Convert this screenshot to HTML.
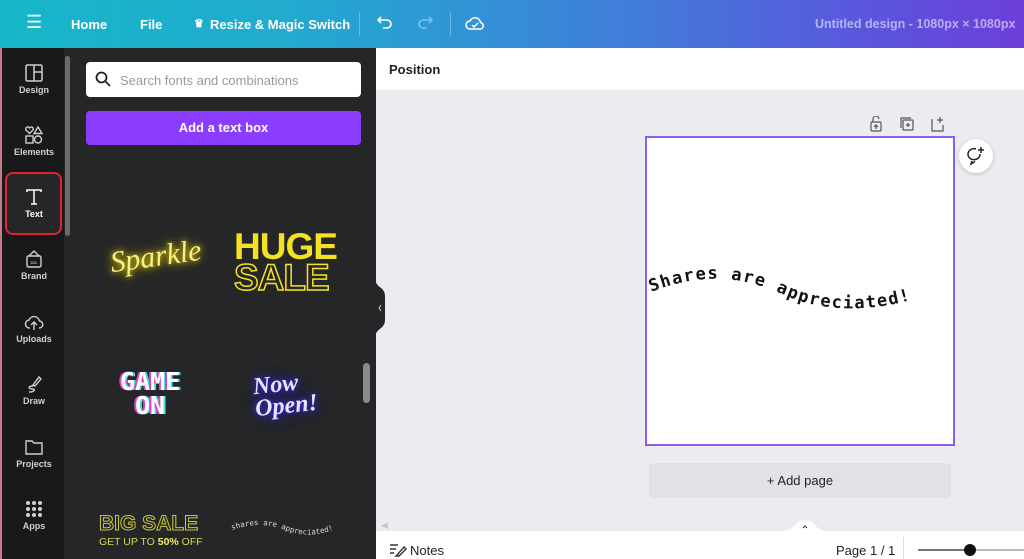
<!DOCTYPE html>
<html><head><meta charset="utf-8"><style>
*{margin:0;padding:0;box-sizing:border-box}
body{width:1024px;height:559px;overflow:hidden;font-family:"Liberation Sans",sans-serif;background:#ebecf0;position:relative}
.top{position:absolute;left:0;top:0;width:1024px;height:48px;background:linear-gradient(90deg,#16b7c8 0%,#23a9d0 30%,#3f7fd9 60%,#5b55dc 85%,#6c3fd9 100%);color:#fff;font-weight:bold;font-size:13px}
.top span{position:absolute;top:17px}
.side{position:absolute;left:0;top:48px;width:64px;height:511px;background:#18191b;border-left:2px solid #c47a8a}
.it{position:absolute;left:0;width:64px;text-align:center;color:#d0d0d0;font-size:9px;font-weight:bold}
.it svg{display:block;margin:0 auto 3px}
.panel{position:absolute;left:64px;top:48px;width:312px;height:511px;background:#252627}
.abs{position:absolute}
</style></head><body>
<div class="top">
<span style="left:26px;top:12px;font-size:18px;font-weight:normal">☰</span>
<span style="left:71px">Home</span><span style="left:140px">File</span>
<span style="left:194px;font-size:11px;top:17px">♛</span><span style="left:210px">Resize &amp; Magic Switch</span>
<div class="abs" style="left:359px;top:12px;width:1px;height:24px;background:rgba(255,255,255,.3)"></div>
<svg class="abs" style="left:376px;top:15px" width="18" height="16" viewBox="0 0 18 16" fill="none" stroke="#fff" stroke-width="1.6"><path d="M5 2 L2 5 L5 8 M2 5 H11 a4 4 0 0 1 0 8 H7"/></svg>
<svg class="abs" style="left:416px;top:15px" width="18" height="16" viewBox="0 0 18 16" fill="none" stroke="rgba(255,255,255,.4)" stroke-width="1.6"><path d="M13 2 L16 5 L13 8 M16 5 H7 a4 4 0 0 0 0 8 H11"/></svg>
<div class="abs" style="left:450px;top:12px;width:1px;height:24px;background:rgba(255,255,255,.3)"></div>
<svg class="abs" style="left:465px;top:14px" width="20" height="18" viewBox="0 0 20 18" fill="none" stroke="#fff" stroke-width="1.5"><path d="M5 15 a4 4 0 0 1 0-8 a5.5 5.5 0 0 1 10.5 1.5 a3.3 3.3 0 0 1 0 6.5 Z M7 11 l2 2 l4-4"/></svg>
<span style="left:815px;color:rgba(255,255,255,.55);font-size:12.5px">Untitled design - 1080px × 1080px</span>
</div>
<div class="side">
<div class="it" style="top:16px"><svg width="18" height="18" fill="none" stroke="#d0d0d0" stroke-width="1.5"><rect x="1" y="1" width="16" height="16" rx="1.5"/><path d="M9 1V17M9 8H17"/></svg>Design</div>
<div class="it" style="top:78px"><svg width="18" height="18" fill="none" stroke="#d0d0d0" stroke-width="1.4"><path d="M4.5 7.5 L1 4 a2 2 0 0 1 3.5-2 a2 2 0 0 1 3.5 2Z M13 1 L17 7.5 H9Z"/><rect x="1" y="10" width="7" height="7"/><circle cx="13" cy="13.5" r="3.5"/></svg>Elements</div>
<div class="abs" style="left:3px;top:124px;width:57px;height:63px;border:2px solid #e0242f;border-radius:8px;background:#252627"></div>
<div class="it" style="top:140px;color:#fff"><svg width="18" height="18" fill="none" stroke="#fff" stroke-width="1.5"><path d="M2 4V2H16V4M9 2V16M6 16H12"/></svg>Text</div>
<div class="it" style="top:202px"><svg width="18" height="18" fill="none" stroke="#d0d0d0" stroke-width="1.4"><rect x="2" y="6" width="14" height="11" rx="1.5"/><path d="M4 6 L9 1 L14 6"/><text x="9" y="14" font-size="4" fill="#d0d0d0" stroke="none" text-anchor="middle">CO.</text></svg>Brand</div>
<div class="it" style="top:265px"><svg width="20" height="18" fill="none" stroke="#d0d0d0" stroke-width="1.4"><path d="M6 15 a4 4 0 0 1-1-8 a5.5 5.5 0 0 1 10.5 1 a3.5 3.5 0 0 1-.5 7 M10 17V9 M7 12 L10 9 L13 12"/></svg>Uploads</div>
<div class="it" style="top:327px"><svg width="18" height="18" fill="none" stroke="#d0d0d0" stroke-width="1.4"><path d="M8 10 L14 2 L16 4 L10 11 Z M8 11 C3 11 3 14 7 14 C11 14 10 17 4 17"/></svg>Draw</div>
<div class="it" style="top:390px"><svg width="18" height="18" fill="none" stroke="#d0d0d0" stroke-width="1.4"><path d="M1 3H7L9 5H17V16H1Z"/></svg>Projects</div>
<div class="it" style="top:452px"><svg width="18" height="18" fill="#d0d0d0"><circle cx="3" cy="3" r="2"/><circle cx="9" cy="3" r="2"/><circle cx="15" cy="3" r="2"/><circle cx="3" cy="9" r="2"/><circle cx="9" cy="9" r="2"/><circle cx="15" cy="9" r="2"/><circle cx="3" cy="15" r="2"/><circle cx="9" cy="15" r="2"/><circle cx="15" cy="15" r="2"/></svg>Apps</div>
</div>
<div class="panel">
<div class="abs" style="left:1px;top:8px;width:5px;height:180px;background:#6a6b6d;border-radius:3px"></div>
<div class="abs" style="left:22px;top:14px;width:275px;height:35px;background:#fff;border-radius:4px"></div>
<svg class="abs" style="left:31px;top:23px" width="16" height="16" fill="none" stroke="#222" stroke-width="1.8"><circle cx="6.5" cy="6.5" r="5"/><path d="M10 10 L15 15"/></svg>
<span class="abs" style="left:56px;top:25px;font-size:13px;color:#9a9a9a">Search fonts and combinations</span>
<div class="abs" style="left:22px;top:63px;width:275px;height:34px;background:#8b3dff;border-radius:4px;color:#fff;font-weight:bold;font-size:13px;text-align:center;line-height:34px">Add a text box</div>
<div class="abs" style="left:299px;top:315px;width:7px;height:40px;background:#8a8a8a;border-radius:4px"></div>
<span class="abs" style="left:46px;top:192px;font-family:'Liberation Serif',serif;font-style:italic;font-size:30px;color:#f6ef8a;text-shadow:0 0 6px #e8d000,0 0 12px #c9b400;transform:rotate(-8deg)">Sparkle</span>
<div class="abs" style="left:170px;top:183px;font-weight:900;font-size:37px;line-height:31px;color:#f5e023;letter-spacing:-1px">HUGE<br><span style="color:transparent;-webkit-text-stroke:1.5px #f5e023">SALE</span></div>
<div class="abs" style="left:36px;top:322px;width:100px;text-align:center;font-family:'DejaVu Sans Mono',monospace;font-weight:bold;font-size:25px;line-height:24px;color:#fff;text-shadow:-2px 0 #e040c0,2px 0 #40e0e0">GAME<br>ON</div>
<div class="abs" style="left:190px;top:325px;font-family:'Liberation Serif',serif;font-style:italic;font-weight:bold;font-size:24px;line-height:22px;color:#e8e4ff;text-shadow:0 0 6px #3c2bff,0 0 14px #2b20c0;transform:rotate(-6deg)">Now<br>Open!</div>
<div class="abs" style="left:35px;top:464px;font-size:21px;font-weight:bold;color:transparent;-webkit-text-stroke:1px #c9c83a">BIG SALE</div>
<div class="abs" style="left:35px;top:488px;font-size:10.5px;color:#d8d850">GET UP TO <b style="color:#f0f060">50%</b> OFF</div>
<svg class="abs" style="left:166px;top:468px" width="110" height="30"><path id="p2" d="M2 14 Q30 4 55 14 T108 12" fill="none"/><text font-family="DejaVu Sans Mono,monospace" font-size="7.5" fill="#ddd"><textPath href="#p2">shares are appreciated!</textPath></text></svg>
</div>
<svg class="abs" style="left:375px;top:278px" width="12" height="60"><path d="M0 0 Q0 6 6 10 Q10 13 10 18 V42 Q10 47 6 50 Q0 54 0 60Z" fill="#252627"/><path d="M6 27 L4 30 L6 33" stroke="#ccc" fill="none"/></svg>
<div class="abs" style="left:376px;top:48px;width:648px;height:42px;background:#fff"></div>
<span class="abs" style="left:389px;top:62px;font-size:13px;font-weight:bold;color:#222">Position</span>
<svg class="abs" style="left:869px;top:116px" width="80" height="16" fill="none" stroke="#555" stroke-width="1.2"><rect x="2" y="6" width="10" height="9" rx="1"/><path d="M4 6 V3 a3 3 0 0 1 6 0 M7 9 V13 M5 11 L7 9 L9 11"/><rect x="34" y="4" width="10" height="10" rx="1"/><path d="M32 12 V2 H42 M39 7 V11 M37 9 H41"/><path d="M64 4 H63 V15 H74 V9 M71 1 V7 M68 4 H74"/></svg>
<div class="abs" style="left:959px;top:139px;width:34px;height:34px;border-radius:50%;background:#fff;box-shadow:0 1px 4px rgba(0,0,0,.2)"></div>
<svg class="abs" style="left:966px;top:146px" width="20" height="20" fill="none" stroke="#222" stroke-width="1.5"><path d="M14 8 a6 5.5 0 1 1-4-5 M6 15 L5 18 L9 15.5 M15 1 V7 M12 4 H18"/></svg>
<div class="abs" style="left:645px;top:136px;width:310px;height:310px;background:#fff;border:2px solid #8b5cf6"></div>
<svg class="abs" style="left:647px;top:250px" width="300" height="80"><path id="p1" d="M4 42 C60 20 100 28 140 46 S240 62 285 42" fill="none"/><text font-family="'DejaVu Sans Mono',monospace" font-weight="bold" font-size="17" letter-spacing="1.4" fill="#111"><textPath href="#p1">Shares are appreciated!</textPath></text></svg>
<div class="abs" style="left:649px;top:463px;width:302px;height:35px;background:#e1e2e6;border-radius:5px;text-align:center;line-height:35px;font-size:13px;color:#222">+ Add page</div>
<div class="abs" style="left:376px;top:531px;width:648px;height:28px;background:#fff"></div>
<svg class="abs" style="left:775px;top:520px" width="60" height="12"><path d="M0 12 Q15 12 20 5 Q24 0 30 0 Q36 0 40 5 Q45 12 60 12Z" fill="#fff"/><path d="M28 8 L30 6 L32 8" stroke="#333" fill="none"/></svg>
<span class="abs" style="left:381px;top:520px;font-size:9px;color:#c8c8c8">◀</span>
<svg class="abs" style="left:389px;top:543px" width="18" height="14" fill="none" stroke="#333" stroke-width="1.4"><path d="M1 2H9M1 6H7M1 10H5M8 12 L15 4 L17 6 L10 13 L7 13Z"/></svg>
<span class="abs" style="left:410px;top:543px;font-size:13px;color:#222">Notes</span>
<span class="abs" style="left:836px;top:543px;font-size:13px;color:#222">Page 1 / 1</span>
<div class="abs" style="left:903px;top:537px;width:1px;height:22px;background:#ddd"></div>
<div class="abs" style="left:918px;top:549px;width:106px;height:2px;background:#bbb"></div>
<div class="abs" style="left:918px;top:549px;width:52px;height:2px;background:#777"></div>
<div class="abs" style="left:964px;top:544px;width:12px;height:12px;border-radius:50%;background:#111"></div>
</body></html>
